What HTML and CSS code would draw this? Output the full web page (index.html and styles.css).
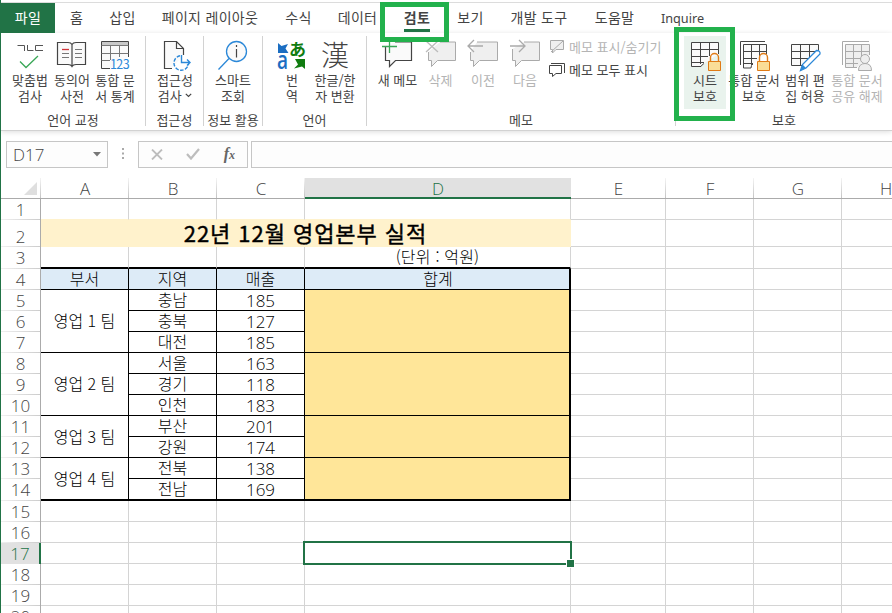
FILE: index.html
```
<!DOCTYPE html>
<html lang="ko">
<head>
    <meta charset="utf-8">
    <title>영업본부 실적</title>
    <link rel="stylesheet" href="styles.css">
</head>
<body>
    <div class="window">
        <div class="tabs">
            <div class="tab file">파일</div>
            <div class="tab">홈</div>
            <div class="tab">삽입</div>
            <div class="tab">페이지 레이아웃</div>
            <div class="tab">수식</div>
            <div class="tab">데이터</div>
            <div class="tab active"><span>검토</span><div class="mark mark-tab"></div></div>
            <div class="tab">보기</div>
            <div class="tab">개발 도구</div>
            <div class="tab">도움말</div>
            <div class="tab latin">Inquire</div>
        </div>

        <div class="ribbon">
            <div class="group g-proof">
                <div class="buttons">
                    <div class="btn w42">
                        <svg width="30" height="30" viewBox="0 0 30 30" fill="none"><path d="M2.500 5.500H9.500V11M12.500 5V10.500H18.500M28 5.500H20.500V10.500H28" stroke="#555"/><path d="M5 21.500l6 6L23 16" stroke="#3aa757" stroke-width="1.300"/></svg>
                        <span>맞춤법<br>검사</span>
                    </div>
                    <div class="btn w42">
                        <svg width="30" height="30" viewBox="0 0 30 30" fill="none"><path d="M.5 2.500H11q3 0 4 2q1-2 4-2h9.500v22H19q-3 0-4 2q-1-2-4-2H.5zM15 4.500v22" fill="#fafafa" stroke="#444" stroke-width="1.200"/><path d="M5 13.500h7M5 17.500h7M18 9.500h7M18 13.500h7M18 17.500h7" stroke="#777"/><path d="M5 9.500h7" stroke="#d13438" stroke-width="1.300"/></svg>
                        <span>동의어<br>사전</span>
                    </div>
                    <div class="btn w44">
                        <svg width="30" height="30" viewBox="0 0 30 30" fill="none"><path d="M10 28.500H1.500v-27h27V17" fill="#fafafa" stroke="#444"/><path d="M2 2h26v3H2z" fill="#c8c8c8"/><path d="M1.500 5.500h27M1.500 13.500h27M1.500 20.500H10M10.500 5.500V20M19.500 5.500V17" stroke="#777"/><text x="10" y="29" class="svg-num">123</text></svg>
                        <span>통합 문<br>서 통계</span>
                    </div>
                </div>
                <div class="caption">언어 교정</div>
            </div>

            <div class="group g-access">
                <div class="buttons">
                    <div class="btn w58">
                        <svg width="30" height="30" viewBox="0 0 30 30" fill="none"><path d="M12 28.500H4.500v-27h12l7 7V15M16.500 1.500v7h7" fill="#fafafa" stroke="#444" stroke-width="1.200"/><path d="M20 15.800A7.300 7.300 0 1 0 28.500 24" stroke="#2b88d8" stroke-width="1.400" stroke-dasharray="3.500 1.500"/><path d="M21.500 15v7.500h8M27 19.500l3 3l-3 3" stroke="#2b88d8" stroke-width="1.400"/></svg>
                        <span>접근성<br>검사 <svg width="7" height="5" viewBox="0 0 7 5" class="caret"><path d="M.8.8l2.700 2.700L6.200.8" fill="none" stroke="#444" stroke-width="1.200"/></svg></span>
                    </div>
                </div>
                <div class="caption">접근성</div>
            </div>

            <div class="group g-info">
                <div class="buttons">
                    <div class="btn w58">
                        <svg width="30" height="30" viewBox="0 0 30 30" fill="none"><circle cx="18.500" cy="11.500" r="10" fill="#fafafa" stroke="#2b88d8" stroke-width="1.300"/><path d="M11 18.500L.5 29.500" stroke="#2b88d8" stroke-width="1.300"/><path d="M18.500 9V17.500M18.500 5v2" stroke="#444" stroke-width="1.200"/></svg>
                        <span>스마트<br>조회</span>
                    </div>
                </div>
                <div class="caption">정보 활용</div>
            </div>

            <div class="group g-lang">
                <div class="buttons">
                    <div class="btn w44">
                        <svg width="30" height="30" viewBox="0 0 30 30"><path d="M1 3l3.500 3L11 4L8.500 8.500l3 4.500H1z" fill="#1b6ec2"/><text transform="translate(0 29) scale(.76 1)" class="svg-a">a</text><text x="12" y="15.500" class="svg-ja">あ</text><path d="M18 19h10v10l-3-2.500L17 28.500l4-4z" fill="#107c10"/></svg>
                        <span>번<br>역</span>
                    </div>
                    <div class="btn w42">
                        <div class="hanja">漢</div>
                        <span>한글/한<br>자 변환</span>
                    </div>
                </div>
                <div class="caption">언어</div>
            </div>

            <div class="group g-memo">
                <div class="buttons">
                    <div class="btn w43">
                        <svg width="30" height="30" viewBox="0 0 30 30" fill="none"><path d="M2.500 7V20.500H6.500V26.500l6-6H28.500v-18.500H12" fill="#fafafa" stroke="#444" stroke-width="1.200"/><path d="M-1 6.500H14M6.500-1V13" stroke="#3aa757" stroke-width="1.300"/></svg>
                        <span>새 메모</span>
                    </div>
                    <div class="btn w43 off">
                        <svg width="30" height="30" viewBox="0 0 30 30" fill="none"><path d="M2.500 12v8.500H5.500V26.500l6-6H29.500v-18.500H14" fill="#efefef" stroke="#aaa"/><path d="M0 1l12 11M12 1L0 12" stroke="#bbb" stroke-width="1.300"/></svg>
                        <span>삭제</span>
                    </div>
                    <div class="btn w42 off">
                        <svg width="30" height="30" viewBox="0 0 30 30" fill="none"><path d="M2.500 12v8.500H5.500V26.500l6-6H29.500v-18.500H9" fill="#efefef" stroke="#aaa"/><path d="M15 6H0M6 0l-6 6l6 6" stroke="#aaa" stroke-width="1.300"/></svg>
                        <span>이전</span>
                    </div>
                    <div class="btn w42 off">
                        <svg width="30" height="30" viewBox="0 0 30 30" fill="none"><path d="M2.500 9v11.500H5.500V26.500l6-6H29.500v-18.500H14" fill="#efefef" stroke="#aaa"/><path d="M0 6H15M9 0l6 6l-6 6" stroke="#aaa" stroke-width="1.300"/></svg>
                        <span>다음</span>
                    </div>
                    <div class="memo-list">
                        <div class="off"><svg width="16" height="15" viewBox="0 0 16 15" fill="none"><path d="M1.500 1.500h13v9H7L3.500 14V10.500h-2z" fill="#efefef" stroke="#aaa"/><path d="M2 13L14 2" stroke="#aaa"/></svg>메모 표시/숨기기</div>
                        <div><svg width="16" height="15" viewBox="0 0 16 15" fill="none"><path d="M2 1.500h13.500V11" stroke="#444"/><path d="M.5 3.500h12v8H7L3.500 14.500v-3h-3z" stroke="#444"/></svg>메모 모두 표시</div>
                    </div>
                </div>
                <div class="caption">메모</div>
            </div>

            <div class="group g-protect">
                <div class="buttons">
                    <div class="btn w42 hot">
                        <svg width="30" height="30" viewBox="0 0 30 30" fill="none"><path d="M14 23.500q-2 1-3 3H1.500v-24h27V14M1.500 9.500h27M1.500 16.500H18M1.500 22.500H14M10.500 3V24M19.500 3v13" fill="#fafafa" stroke="#444"/><path d="M20.500 21v-3.500a4 4 0 0 1 8 0V21" stroke="#e07b16" stroke-width="1.400"/><path d="M18.500 21.500h12v9h-12z" fill="#fadd97" stroke="#e07b16"/></svg>
                        <span>시트<br>보호</span>
                        <div class="mark mark-sheet"></div>
                    </div>
                    <div class="btn w56">
                        <svg width="30" height="30" viewBox="0 0 30 30" fill="none"><path d="M1.500 25V1.500H26" stroke="#444"/><path d="M14 24q-2 1-2 4H4.500v-23.500h23V14M4.500 11.500h23M4.500 18.500H18M4.500 23.500H14M12.500 5V25M20.500 5v11" fill="#fafafa" stroke="#444"/><path d="M20.500 21v-3.500a4 4 0 0 1 8 0V21" stroke="#e07b16" stroke-width="1.400"/><path d="M18.500 21.500h12v9h-12z" fill="#fadd97" stroke="#e07b16"/></svg>
                        <span>통합 문서<br>보호</span>
                    </div>
                    <div class="btn w46">
                        <svg width="30" height="30" viewBox="0 0 30 30" fill="none"><path d="M12 25.500H1.500v-21h27v7M1.500 11.500h27M1.500 18.500H19M10.500 5V25M19.500 5v14" fill="#fafafa" stroke="#444"/><path d="M10.500 30.500l2-6L26.500 10.500q4 0 3.500 3.500L16 28z" fill="#fff" stroke="#2b88d8" stroke-width="1.300"/><path d="M10.500 30.500l2-6l3.500 3.500z" fill="#2b88d8"/></svg>
                        <span>범위 편<br>집 허용</span>
                    </div>
                    <div class="btn w58 off">
                        <svg width="30" height="30" viewBox="0 0 30 30" fill="none"><path d="M.5 25V1.500H27" stroke="#aaa"/><path d="M15 27.500H3.500v-23h24V15M3.500 11.500h24M3.500 18.500H18M3.500 23.500H16M11.500 5V27M19.500 5v12" fill="#efefef" stroke="#aaa"/><circle cx="23" cy="19" r="4.500" fill="#eee" stroke="#aaa"/><path d="M16.500 30.500q0-7 6.500-7t6.500 7z" fill="#eee" stroke="#aaa"/></svg>
                        <span>통합 문서<br>공유 해제</span>
                    </div>
                </div>
                <div class="caption">보호</div>
            </div>
        </div>

        <div class="formula-bar">
            <div class="name-box"><span>D17</span><svg width="8" height="5" viewBox="0 0 8 5"><path d="M0 0h8L4 4.500z" fill="#777"/></svg></div>
            <svg class="dots" width="2" height="12" viewBox="0 0 2 12"><path d="M0 0h2v2H0zM0 4.500h2v2H0zM0 9h2v2H0z" fill="#aaa"/></svg>
            <div class="fx-box">
                <svg width="12" height="11" viewBox="0 0 12 11"><path d="M1 .5l10 10M11 .5L1 10.500" stroke="#bdbdbd" stroke-width="1.800"/></svg>
                <svg width="14" height="12" viewBox="0 0 14 12"><path d="M1 6l4 4.500L13 1" fill="none" stroke="#bdbdbd" stroke-width="2.200"/></svg>
                <span class="fx">f<small>x</small></span>
            </div>
            <div class="input-box"></div>
        </div>

        <table class="sheet">
            <colgroup>
                <col class="c-head"><col class="c-std"><col class="c-std"><col class="c-std"><col class="c-wide"><col class="c-e"><col class="c-std"><col class="c-std"><col class="c-std">
            </colgroup>
            <tr class="cols">
                <th class="corner"><svg width="13" height="13" viewBox="0 0 13 13"><path d="M13 0v13H0z" fill="#dfdfdf"/></svg></th>
                <th>A</th><th>B</th><th>C</th><th class="on">D</th><th>E</th><th>F</th><th>G</th><th>H</th>
            </tr>
            <tr><th>1</th><td class="cream-b"></td><td class="cream-b"></td><td class="cream-b"></td><td class="cream-b"></td><td></td><td></td><td></td><td></td></tr>
            <tr class="r2"><th>2</th><td colspan="4" class="title">22년 12월 영업본부 실적</td><td></td><td></td><td></td><td></td></tr>
            <tr class="r22"><th>3</th><td class="thick-b"></td><td class="thick-b"></td><td class="thick-b"></td><td class="thick-b unit">(단위 : 억원)</td><td></td><td></td><td></td><td></td></tr>
            <tr><th>4</th><td class="k head">부서</td><td class="k head">지역</td><td class="k head">매출</td><td class="k head last">합계</td><td></td><td></td><td></td><td></td></tr>
            <tr><th>5</th><td class="k" rowspan="3">영업 1 팀</td><td class="k">충남</td><td class="k num">185</td><td class="k sum last" rowspan="3"></td><td></td><td></td><td></td><td></td></tr>
            <tr><th>6</th><td class="k">충북</td><td class="k num">127</td><td></td><td></td><td></td><td></td></tr>
            <tr><th>7</th><td class="k">대전</td><td class="k num">185</td><td></td><td></td><td></td><td></td></tr>
            <tr><th>8</th><td class="k" rowspan="3">영업 2 팀</td><td class="k">서울</td><td class="k num">163</td><td class="k sum last" rowspan="3"></td><td></td><td></td><td></td><td></td></tr>
            <tr><th>9</th><td class="k">경기</td><td class="k num">118</td><td></td><td></td><td></td><td></td></tr>
            <tr><th>10</th><td class="k">인천</td><td class="k num">183</td><td></td><td></td><td></td><td></td></tr>
            <tr><th>11</th><td class="k" rowspan="2">영업 3 팀</td><td class="k">부산</td><td class="k num">201</td><td class="k sum last" rowspan="2"></td><td></td><td></td><td></td><td></td></tr>
            <tr><th>12</th><td class="k">강원</td><td class="k num">174</td><td></td><td></td><td></td><td></td></tr>
            <tr><th>13</th><td class="k thick-b" rowspan="2">영업 4 팀</td><td class="k">전북</td><td class="k num">138</td><td class="k sum last thick-b" rowspan="2"></td><td></td><td></td><td></td><td></td></tr>
            <tr class="r22"><th>14</th><td class="k thick-b">전남</td><td class="k num thick-b">169</td><td></td><td></td><td></td><td></td></tr>
            <tr><th>15</th><td></td><td></td><td></td><td></td><td></td><td></td><td></td><td></td></tr>
            <tr><th>16</th><td></td><td></td><td></td><td></td><td></td><td></td><td></td><td></td></tr>
            <tr><th class="on">17</th><td></td><td></td><td></td><td class="selected"><div class="cursor"></div></td><td></td><td></td><td></td><td></td></tr>
            <tr><th>18</th><td></td><td></td><td></td><td></td><td></td><td></td><td></td><td></td></tr>
            <tr><th>19</th><td></td><td></td><td></td><td></td><td></td><td></td><td></td><td></td></tr>
            <tr><th>20</th><td></td><td></td><td></td><td></td><td></td><td></td><td></td><td></td></tr>
        </table>
    </div>
</body>
</html>
```
FILE: styles.css
```
* {
    box-sizing: border-box;
}

body {
    margin: 0;
    background: #fff;
    font-family: "Noto Sans CJK KR", sans-serif;
    color: #444;
    overflow: hidden;
}

.window {
    width: 892px;
    height: 613px;
    border-left: 1px solid #217346;
    overflow: hidden;
}

/* tabs */
.tabs {
    display: grid;
    grid-template-columns: 54px 42px 50px 125px 52px 66px 54px 52px 85px 66px 70px;
    height: 33px;
    padding-top: 3px;
    background: linear-gradient(#fff 2px, #dcdcdc 2px, #dcdcdc 3px, #fff 3px);
}

.tab {
    display: flex;
    align-items: center;
    justify-content: center;
    height: 30px;
    padding: 0 0 2px 1px;
    font-size: 14px;
    letter-spacing: 0.3px;
    white-space: nowrap;
}

.tab.file {
    padding-left: 0;
    background: #217346;
    color: #fff;
}

.tab.latin {
    padding-bottom: 0;
    font-family: "Noto Sans", sans-serif;
    font-size: 12.7px;
    letter-spacing: 0;
}

.tab.active {
    position: relative;
    padding: 0;
    font-weight: bold;
}

.tab.active span {
    height: 28px;
    line-height: 26px;
    border-bottom: 3px solid #217346;
}

.mark {
    position: absolute;
    border: 5px solid #22b14c;
    z-index: 2;
}

.mark-tab {
    left: -10px;
    top: -1px;
    width: 69px;
    height: 40px;
}

.mark-sheet {
    left: -10px;
    top: -9px;
    width: 61px;
    height: 94px;
}

/* ribbon */
.ribbon {
    display: flex;
    height: 98px;
    padding-top: 3px;
    border-bottom: 1px solid #d2d2d2;
    box-shadow: 0 1px 5px #ddd;
}

.group {
    display: flex;
    flex-direction: column;
    flex: none;
    height: 90px;
    border-right: 1px solid #d2d2d2;
}

.g-proof { width: 145px; }
.g-access { width: 58px; }
.g-info { width: 59px; }
.g-lang { width: 104px; }
.g-memo { width: 309px; }
.g-protect { width: 216px; border-right: none; }

.g-proof .buttons,
.g-protect .buttons { padding-left: 8px; }
.g-lang .buttons { padding-left: 7px; }
.g-memo .buttons { padding-left: 9px; }

.buttons {
    display: flex;
    height: 74px;
}

.caption {
    height: 16px;
    line-height: 19px;
    font-size: 13px;
    text-align: center;
    white-space: nowrap;
}

.btn {
    display: flex;
    flex-direction: column;
    align-items: center;
    flex: none;
    height: 73px;
    padding-top: 4px;
    font-size: 13px;
    line-height: 16px;
    text-align: center;
    white-space: nowrap;
}

.btn > svg {
    flex: none;
    margin-bottom: 2px;
    overflow: visible;
}

.w42 { width: 42px; }
.w43 { width: 43px; }
.w44 { width: 44px; }
.w46 { width: 46px; }
.w56 { width: 56px; }
.w58 { width: 58px; }

.off {
    color: #b4b4b4;
}

.hot {
    position: relative;
    background: #e9f3ed;
}

.caret {
    vertical-align: 3px;
}

.hanja {
    height: 32px;
    font-family: "Noto Sans CJK TC", sans-serif;
    font-size: 28px;
    font-weight: 300;
    line-height: 29px;
}

.svg-num {
    font: 12.5px "Noto Sans CJK KR", sans-serif;
    letter-spacing: -0.6px;
    fill: #2b88d8;
}

.svg-a {
    font: 600 25px "Open Sans", sans-serif;
    fill: #1b6ec2;
}

.svg-ja {
    font: bold 17px "Noto Sans CJK JP", sans-serif;
    fill: #107c10;
}

.memo-list {
    padding: 0 0 0 3px;
    font-size: 13px;
    white-space: nowrap;
}

.memo-list div {
    display: flex;
    align-items: center;
    gap: 4px;
    height: 23px;
    padding-bottom: 2px;
}

/* formula bar */
.formula-bar {
    display: flex;
    align-items: center;
    height: 47px;
    padding: 0 0 1px 5px;
}

.name-box,
.fx-box,
.input-box {
    display: flex;
    align-items: center;
    height: 27px;
    border: 1px solid #c6c6c6;
    background: #fdfdfd;
}

.name-box {
    width: 102px;
    justify-content: space-between;
    padding: 0 6px;
    font: 300 17px "Open Sans", sans-serif;
}

.dots {
    margin: 0 14px 0 14px;
}

.fx-box {
    width: 110px;
    justify-content: space-between;
    padding: 0 12px;
}

.fx {
    font: italic bold 16px "Liberation Serif", serif;
    color: #666;
}

.fx small {
    font-size: 12px;
}

.input-box {
    flex: 1;
    margin-left: 3px;
    border-right: none;
}

/* sheet */
.sheet {
    width: 929px;
    table-layout: fixed;
    border-collapse: separate;
    border-spacing: 0;
}

.c-head { width: 40px; }
.c-std { width: 88px; }
.c-wide { width: 266px; }
.c-e { width: 95px; }

.sheet tr { height: 21px; }
.sheet tr.r2 { height: 27px; }
.sheet tr.r22 { height: 22px; }

.sheet th,
.sheet td {
    padding: 0;
    line-height: 18px;
    white-space: nowrap;
    text-align: center;
}

.sheet th {
    padding-top: 2px;
    border-right: 1px solid #ababab;
    background: linear-gradient(to right, #f0f0f0, #ccc) bottom / 100% 1px no-repeat;
    font: 300 17px/18px "Open Sans", sans-serif;
    color: #444;
    vertical-align: top;
}

.sheet .r2 th {
    padding-top: 8px;
}

.sheet th.on {
    background: #e1e1e1;
    border-right: 2px solid #217346;
    color: #217346;
}

.sheet .cols th {
    border-right: none;
    border-bottom: 1px solid #ababab;
    background: linear-gradient(#f4f4f4, #c4c4c4) right / 1px 100% no-repeat;
}

.sheet .cols th.on {
    background: #e1e1e1;
    border-bottom: 2px solid #217346;
    line-height: 17px;
}

.sheet .corner svg {
    display: block;
    margin: 2px 0 0 23px;
}

.sheet td {
    padding-bottom: 2px;
    border-right: 1px solid #d4d4d4;
    border-bottom: 1px solid #d4d4d4;
    font-size: 16px;
    font-weight: 300;
    color: #000;
}

.sheet td.cream-b {
    border-bottom-color: #fff2cc;
}

.sheet td.title {
    border-color: #fff2cc;
    background: #fff2cc;
    font-size: 22px;
    font-weight: 400;
    line-height: 24px;
    letter-spacing: 0.95px;
    -webkit-text-stroke: 0.4px #000;
}

.sheet td.unit {
    letter-spacing: 0.2px;
}

.sheet td.k {
    border-color: #000;
}

.sheet td.head {
    background: #ddebf7;
}

.sheet td.num {
    padding: 2px 0 0;
    font: 300 17px/18px "Open Sans", sans-serif;
    vertical-align: top;
}

.sheet td.sum {
    background: #ffe699;
}

.sheet td.last {
    padding-left: 2px;
    border-right-width: 2px;
}

.sheet td.thick-b {
    border-bottom: 2px solid #000;
}

.selected {
    position: relative;
}

.cursor {
    position: absolute;
    left: -2px;
    top: -2px;
    width: 269px;
    height: 24px;
    border: 2px solid #217346;
}

.cursor:after {
    content: "";
    position: absolute;
    right: -5px;
    bottom: -5px;
    width: 7px;
    height: 7px;
    background: #217346;
    border: 1px solid #fff;
}
```
